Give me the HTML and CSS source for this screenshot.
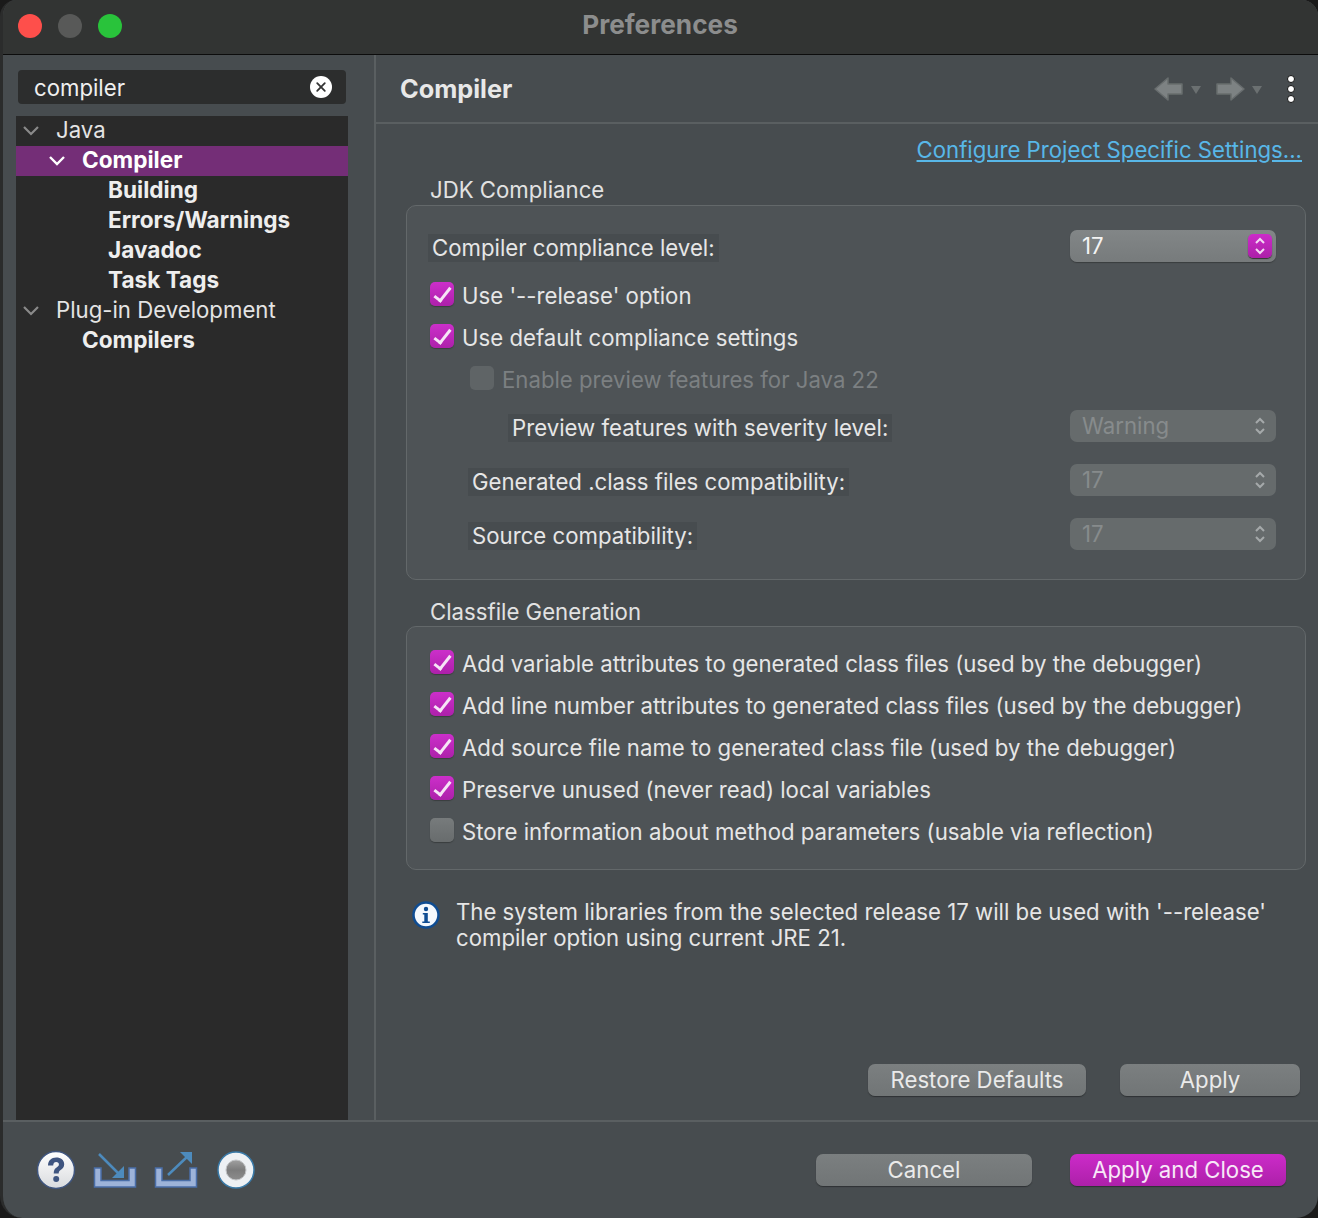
FILE: index.html
```html
<!DOCTYPE html>
<html lang="en">
<head>
  <meta charset="UTF-8" />
  <title>Preferences</title>
  <link rel="stylesheet" href="styles.css">
</head>
<body>
  <div class="window">
    <header class="titlebar">
      <div class="lights">
        <span class="light red"></span>
        <span class="light grey"></span>
        <span class="light green"></span>
      </div>
      <div class="title">Preferences</div>
    </header>

    <div class="main">
      <!-- Left tree -->
      <aside class="sidebar">
        <div class="search">
          <span class="search-text">compiler</span>
          <svg class="clear" width="22" height="22" viewBox="0 0 22 22"><circle cx="11" cy="11" r="11" fill="#fff"/><path d="M7.2 7.2l7.6 7.6M14.800 7.2l-7.600 7.600" stroke="#333" stroke-width="1.800" stroke-linecap="round"/></svg>
        </div>
        <div class="tree">
          <div class="node lvl0"><svg class="twist" width="18" height="12" viewBox="0 0 18 12"><path d="M2 2l7 7 7-7" fill="none" stroke="#8a8a8a" stroke-width="2.200"/></svg>Java</div>
          <div class="node lvl1 bold selected"><svg class="twist" width="18" height="12" viewBox="0 0 18 12"><path d="M2 2l7 7 7-7" fill="none" stroke="#fff" stroke-width="2.400"/></svg>Compiler</div>
          <div class="node lvl2 bold">Building</div>
          <div class="node lvl2 bold">Errors/Warnings</div>
          <div class="node lvl2 bold">Javadoc</div>
          <div class="node lvl2 bold">Task Tags</div>
          <div class="node lvl0"><svg class="twist" width="18" height="12" viewBox="0 0 18 12"><path d="M2 2l7 7 7-7" fill="none" stroke="#8a8a8a" stroke-width="2.200"/></svg>Plug-in Development</div>
          <div class="node lvl1 bold">Compilers</div>
        </div>
      </aside>

      <!-- Right page -->
      <section class="page">
        <div class="page-head">
          <h1>Compiler</h1>
          <div class="tools">
            <svg width="30" height="26" viewBox="0 0 30 26"><path d="M1 13L14 2v6h14v10H14v6z" fill="#7d8283" stroke="#686d6e" stroke-width="1.500" stroke-linejoin="round"/></svg>
            <span class="drop"></span>
            <svg class="fwd" width="30" height="26" viewBox="0 0 30 26"><path d="M29 13L16 2v6H2v10h14v6z" fill="#7d8283" stroke="#686d6e" stroke-width="1.500" stroke-linejoin="round"/></svg>
            <span class="drop"></span>
            <div class="dots"><i></i><i></i><i></i></div>
          </div>
        </div>

        <div class="page-body">
          <div class="link-row"><a href="#">Configure Project Specific Settings...</a></div>

          <div class="legend">JDK Compliance</div>
          <div class="group">
            <div class="row first">
              <span class="tag">Compiler compliance level:</span>
              <div class="select active">17<span class="stepper"><svg width="12" height="20" viewBox="0 0 12 20"><path d="M2 7l4-4 4 4M2 13l4 4 4-4" fill="none" stroke="#f3d9f3" stroke-width="2"/></svg></span></div>
            </div>
            <label class="check on">Use '--release' option</label>
            <label class="check on">Use default compliance settings</label>
            <label class="check dim indent">Enable preview features for Java 22</label>
            <div class="row sub2">
              <span class="tag">Preview features with severity level:</span>
              <div class="select off">Warning<svg width="12" height="20" viewBox="0 0 12 20"><path d="M2 7l4-4 4 4M2 13l4 4 4-4" fill="none" stroke="#a5a9aa" stroke-width="2"/></svg></div>
            </div>
            <div class="row sub1">
              <span class="tag">Generated .class files compatibility:</span>
              <div class="select off">17<svg width="12" height="20" viewBox="0 0 12 20"><path d="M2 7l4-4 4 4M2 13l4 4 4-4" fill="none" stroke="#a5a9aa" stroke-width="2"/></svg></div>
            </div>
            <div class="row sub1">
              <span class="tag">Source compatibility:</span>
              <div class="select off">17<svg width="12" height="20" viewBox="0 0 12 20"><path d="M2 7l4-4 4 4M2 13l4 4 4-4" fill="none" stroke="#a5a9aa" stroke-width="2"/></svg></div>
            </div>
          </div>

          <div class="legend second">Classfile Generation</div>
          <div class="group classfile">
            <label class="check on">Add variable attributes to generated class files (used by the debugger)</label>
            <label class="check on">Add line number attributes to generated class files (used by the debugger)</label>
            <label class="check on">Add source file name to generated class file (used by the debugger)</label>
            <label class="check on">Preserve unused (never read) local variables</label>
            <label class="check">Store information about method parameters (usable via reflection)</label>
          </div>

          <div class="info">
            <svg width="28" height="28" viewBox="0 0 28 28"><circle cx="14" cy="14" r="12.500" fill="#f4f8fd" stroke="#0f4c92" stroke-width="2.500"/><circle cx="14" cy="8" r="2.200" fill="#0f4c92"/><path d="M10.800 12h5v8.500h2V22h-7.500v-1.500h2V13.500h-1.500z" fill="#0f4c92"/></svg>
            <p>The system libraries from the selected release 17 will be used with '--release' compiler option using current JRE 21.</p>
          </div>

          <div class="page-buttons">
            <button class="btn restore">Restore Defaults</button>
            <button class="btn apply">Apply</button>
          </div>
        </div>
      </section>
    </div>

    <footer class="footer">
      <div class="foot-icons">
        <svg width="40" height="40" viewBox="0 0 40 40"><defs><linearGradient id="hg" x1="0" y1="0" x2="0" y2="1"><stop offset="0" stop-color="#fff"/><stop offset="1" stop-color="#d9dbde"/></linearGradient></defs><circle cx="20" cy="20" r="18.500" fill="url(#hg)" stroke="#40567f" stroke-width="1.500"/><path d="M12 15.500c0-5 3.400-8 8.200-8 4.700 0 8 2.700 8 6.700 0 3-1.700 4.400-3.600 5.700-1.400 1-1.900 1.700-1.900 3.600h-5c0-3.300.9-4.700 2.900-6.100 1.400-1 2.300-1.700 2.300-3 0-1.400-1-2.300-2.700-2.300-1.800 0-2.900 1.100-3 3.400z" fill="#3f5580"/><circle cx="20.200" cy="29" r="3" fill="#3f5580"/></svg>
        <svg class="ico-in" width="44" height="38" viewBox="0 0 44 38"><path d="M8 17H1.500v19h41V17H36v12.500H8z" fill="#9db3d9" stroke="#4a6ea8" stroke-width="1.500"/><path d="M6 3l22 22" stroke="#4d8bbd" stroke-width="2.500"/><path d="M31 27H19l12-12z" fill="#4d8bbd"/></svg>
        <svg class="ico-out" width="44" height="38" viewBox="0 0 44 38"><path d="M8 17H1.500v19h41V17H36v12.500H8z" fill="#9db3d9" stroke="#4a6ea8" stroke-width="1.500"/><path d="M14 24L34 5" stroke="#4d8bbd" stroke-width="2.500"/><path d="M38 1v12L26 1z" fill="#4d8bbd"/></svg>
        <svg class="ico-rec" width="40" height="40" viewBox="0 0 40 40"><defs><linearGradient id="rg" x1="0" y1="0" x2="0" y2="1"><stop offset="0" stop-color="#a0a0a0"/><stop offset="0.500" stop-color="#7c7c7c"/><stop offset="1" stop-color="#8c8c8c"/></linearGradient></defs><circle cx="20" cy="20" r="18" fill="#eef1f4" stroke="#3a7aa8" stroke-width="1.500"/><circle cx="20" cy="20" r="10" fill="url(#rg)" stroke="#c2c4c6" stroke-width="1"/></svg>
      </div>
      <div class="foot-buttons">
        <button class="btn cancel">Cancel</button>
        <button class="btn primary">Apply and Close</button>
      </div>
    </footer>
  </div>
</body>
</html>
```

FILE: styles.css
```css
html, body {
  margin: 0;
  height: 100%;
  background: #1a1a1a;
}
body {
  font-family: "Inter", "Liberation Sans", sans-serif;
  font-size: 22.2px;
  color: #e6e6e6;
  overflow: hidden;
}
.window {
  width: 1318px;
  height: 1218px;
  box-sizing: border-box;
  border-left: 3px solid #2b2c2c;
  background: #474c4f;
  border-radius: 16px 16px 22px 22px;
  display: flex;
  flex-direction: column;
  overflow: hidden;
}

/* Title bar */
.titlebar {
  height: 54px;
  flex: none;
  background: #323433;
  border-bottom: 1px solid #0c0c0c;
  display: flex;
  align-items: center;
  position: relative;
}
.lights {
  display: flex;
  gap: 16px;
  margin-left: 15px;
  margin-top: -2px;
}
.light {
  width: 24px;
  height: 24px;
  border-radius: 50%;
}
.red { background: #fe4f4b; }
.grey { background: #585958; }
.green { background: #29c33b; }
.title {
  position: absolute;
  left: 0;
  right: 1px;
  text-align: center;
  font-size: 26.200px;
  font-weight: 700;
  color: #8c8d8d;
  top: 9px;
}

.main {
  flex: 1;
  display: flex;
  min-height: 0;
}

/* Sidebar */
.sidebar {
  width: 373px;
  flex: none;
  box-sizing: border-box;
  border-right: 2px solid #5a5f61;
  padding: 15px 0 0 13px;
  display: flex;
  flex-direction: column;
}
.search {
  width: 328px;
  height: 34px;
  margin-left: 2px;
  box-sizing: border-box;
  background: #2c2d2d;
  border-radius: 4px;
  padding: 0 14px 0 16px;
  display: flex;
  align-items: center;
  justify-content: space-between;
  color: #f0f0f0;
  margin-bottom: 12px;
}
.tree {
  flex: 1;
  width: 332px;
  background: #2a2a2a;
}
.node {
  height: 30px;
  box-sizing: border-box;
  padding-bottom: 3px;
  display: flex;
  align-items: center;
  color: #e4e4e4;
}
.twist { flex: none; margin-top: 3px; }
.bold { font-size: 22.600px; font-weight: 700; color: #eeeeee; }
.lvl0 { padding-left: 40px; }
.lvl0 .twist { margin-left: -34px; margin-right: 16px; }
.lvl1 { padding-left: 66px; }
.lvl1 .twist { margin-left: -34px; margin-right: 16px; }
.lvl2 { padding-left: 92px; }
.selected { background: #742e77; color: #fff; }

/* Page */
.page {
  flex: 1;
  display: flex;
  flex-direction: column;
  min-width: 0;
}
.page-head {
  height: 69px;
  flex: none;
  box-sizing: border-box;
  border-bottom: 2px solid #5a5f61;
  padding: 0 23px 0 24px;
  display: flex;
  align-items: center;
  justify-content: space-between;
}
.page-head h1 {
  margin: 0;
  font-size: 25.300px;
  font-weight: 700;
  color: #e8e8e8;
}
.tools {
  display: flex;
  align-items: center;
}
.drop {
  width: 0;
  height: 0;
  border-left: 5px solid transparent;
  border-right: 5px solid transparent;
  border-top: 8px solid #6b7071;
  margin: 2px 0 0 7px;
}
.fwd { margin-left: 14px; }
.dots {
  display: flex;
  flex-direction: column;
  gap: 2px;
  margin-left: 25px;
}
.dots i {
  width: 6px;
  height: 6px;
  background: #fff;
  border: 1px solid #111;
  border-radius: 50%;
}
.page-body {
  flex: 1;
  display: flex;
  flex-direction: column;
  padding: 12px 12px 24px 30px;
  min-height: 0;
}
.link-row {
  text-align: right;
  height: 30px;
  line-height: 28px;
  margin-bottom: 12px;
  padding-right: 4px;
}
.link-row a { color: #58b7e8; }
.legend {
  margin-left: 24px;
  height: 25px;
  line-height: 23px;
  margin-bottom: 2px;
  color: #e2e2e2;
}
.legend.second { margin-top: 20px; margin-bottom: 1px; }
.group {
  box-sizing: border-box;
  border: 1px solid #63686a;
  border-radius: 10px;
  background: #4e5356;
  padding: 24px 29px 29px 23px;
  display: flex;
  flex-direction: column;
}
.classfile { padding: 16px 29px 15px 23px; height: 244px; }
.row {
  display: flex;
  align-items: center;
  justify-content: space-between;
  height: 32px;
  margin-top: 22px;
}
.row.first { margin: 0 0 13px; }
.row.sub2 { margin-top: 9px; padding-left: 80px; }
.row.sub1 { padding-left: 40px; }
.tag {
  background: #474c4f;
  padding: 0 4px;
  height: 28px;
  line-height: 28px;
  margin: 4px 0 0 -2px;
}
.select {
  width: 206px;
  height: 32px;
  box-sizing: border-box;
  border-radius: 7px;
  padding: 0 10px 2px 12px;
  display: flex;
  align-items: center;
  justify-content: space-between;
}
.select svg { margin-top: 2px; }
.select.active {
  background: linear-gradient(#828687, #777b7c);
  box-shadow: 0 1px 1px #3a3d3f;
  padding-right: 4px;
  color: #f4f4f4;
}
.select.off {
  background: #666b6c;
  color: #878b8c;
}
.stepper {
  width: 24px;
  height: 24px;
  margin-top: 2px;
  background: linear-gradient(#cc2bc9, #ac20a8);
  border-radius: 5px;
  display: flex;
  align-items: center;
  justify-content: center;
  box-shadow: 0 1px 1px #333;
}
.stepper svg { margin-top: 0; }
.check {
  height: 42px;
  line-height: 42px;
  padding-left: 32px;
  position: relative;
  color: #e6e6e6;
  white-space: nowrap;
}
.check::before {
  content: "";
  position: absolute;
  left: 0;
  top: 7px;
  width: 24px;
  height: 24px;
  box-sizing: border-box;
  border-radius: 5px;
  background: linear-gradient(#777b7c, #686c6d);
  box-shadow: 0 1px 1px #3a3d3f;
}
.check.on::before {
  background: linear-gradient(#cc2fca, #ad20aa);
}
.check.on::after {
  content: "";
  position: absolute;
  left: 8px;
  top: 9px;
  width: 6px;
  height: 15px;
  border: solid #f6e4f6;
  border-width: 0 3.500px 3.500px 0;
  transform: rotate(38deg);
}
.check.dim { color: #7c8082; }
.check.dim::before {
  background: #5f6466;
  box-shadow: none;
}
.indent { margin-left: 40px; }

.info {
  display: flex;
  gap: 16px;
  margin: 29px 20px 0 6px;
  align-items: flex-start;
}
.info svg { flex: none; margin-top: 2px; }
.info p {
  margin: 0;
  line-height: 26px;
  color: #e6e6e6;
}
.page-buttons {
  margin-top: auto;
  display: flex;
  justify-content: flex-end;
  gap: 34px;
  padding-right: 6px;
}
.btn {
  font: inherit;
  height: 32px;
  padding: 0 0 2px;
  border: none;
  border-radius: 7px;
  color: #eaeaea;
  background: linear-gradient(#7b7f80, #717576);
  box-shadow: 0 1px 1px #2e3133;
}
.restore { width: 218px; }
.apply { width: 180px; }
.cancel { width: 216px; }
.primary {
  width: 216px;
  color: #f8e8f8;
  background: linear-gradient(#cc2bc9, #ad20a9);
}

/* Footer */
.footer {
  height: 98px;
  flex: none;
  box-sizing: border-box;
  border-top: 2px solid #5a5f61;
  padding: 0 32px 0 33px;
  display: flex;
  align-items: center;
  justify-content: space-between;
}
.foot-icons {
  display: flex;
  align-items: center;
  gap: 17px;
}
.ico-rec { margin-left: 1px; }
.foot-buttons {
  display: flex;
  gap: 38px;
}
```
